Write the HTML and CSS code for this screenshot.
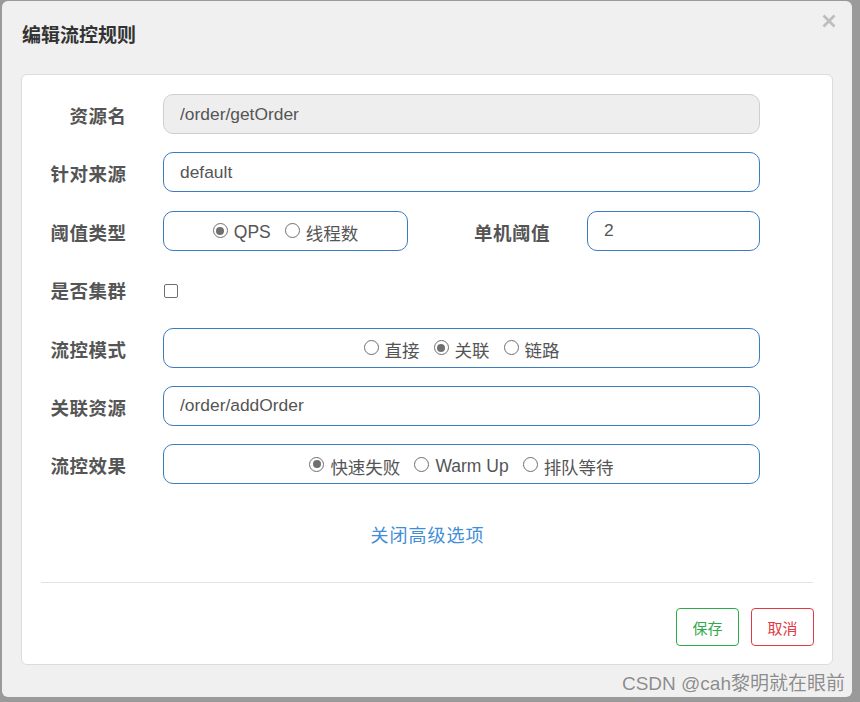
FILE: index.html
```html
<!DOCTYPE html>
<html lang="zh-CN">
<head>
<meta charset="utf-8">
<title>编辑流控规则</title>
<link rel="stylesheet" href="styles.css">
</head>
<body>
<div class="dialog">
  <button class="close" aria-label="关闭">
    <svg width="14" height="14" viewBox="0 0 14 14"><path d="M1.5 1.5 L12.5 12.5 M12.5 1.5 L1.5 12.5" stroke="#bdbdbd" stroke-width="2.6" stroke-linecap="butt"/></svg>
  </button>
  <h3 class="title">编辑流控规则</h3>
  <div class="panel">
    <form class="form">
      <div class="row">
        <label class="label">资源名</label>
        <div class="field"><input class="input disabled" value="/order/getOrder" disabled></div>
      </div>
      <div class="row">
        <label class="label">针对来源</label>
        <div class="field"><input class="input" value="default"></div>
      </div>
      <div class="row">
        <label class="label">阈值类型</label>
        <div class="field split">
          <div class="radio-box small">
            <span class="opt"><span class="radio on"></span>QPS</span>
            <span class="opt"><span class="radio"></span>线程数</span>
          </div>
          <label class="label inline">单机阈值</label>
          <input class="input grow" value="2">
        </div>
      </div>
      <div class="row">
        <label class="label">是否集群</label>
        <div class="field"><span class="checkbox"></span></div>
      </div>
      <div class="row">
        <label class="label">流控模式</label>
        <div class="field">
          <div class="radio-box">
            <span class="opt"><span class="radio"></span>直接</span>
            <span class="opt"><span class="radio on"></span>关联</span>
            <span class="opt"><span class="radio"></span>链路</span>
          </div>
        </div>
      </div>
      <div class="row">
        <label class="label">关联资源</label>
        <div class="field"><input class="input" value="/order/addOrder"></div>
      </div>
      <div class="row">
        <label class="label">流控效果</label>
        <div class="field">
          <div class="radio-box">
            <span class="opt"><span class="radio on"></span>快速失败</span>
            <span class="opt"><span class="radio"></span>Warm Up</span>
            <span class="opt"><span class="radio"></span>排队等待</span>
          </div>
        </div>
      </div>
    </form>
    <div class="toggle"><a class="link">关闭高级选项</a></div>
    <div class="divider"></div>
    <div class="footer">
      <button class="btn save">保存</button>
      <button class="btn cancel">取消</button>
    </div>
  </div>
  <div class="watermark">CSDN @cah黎明就在眼前</div>
</div>
</body>
</html>
```

FILE: styles.css
```css
* { box-sizing: border-box; }
html, body { margin: 0; padding: 0; }
body {
  width: 860px;
  height: 702px;
  background: #9a9a9a;
  overflow: hidden;
  font-family: "Liberation Sans", "Noto Sans CJK SC", sans-serif;
  color: #555;
}
.dialog {
  position: relative;
  margin: 1px 0 0 2px;
  width: 850px;
  height: 696px;
  background: #f0f0f0;
  border-radius: 6px;
  padding: 20px 19px 0 19px;
}
.close {
  position: absolute;
  top: 13px;
  right: 16px;
  padding: 0;
  border: 0;
  background: none;
  width: 14px;
  height: 14px;
  line-height: 0;
}
.title {
  margin: 0 0 0 1px;
  font-family: "Noto Sans CJK SC", sans-serif;
  font-size: 19px;
  line-height: 26px;
  font-weight: 700;
  color: #333;
}
.panel {
  margin-top: 27px;
  background: #fff;
  border: 1px solid #dcdcdc;
  border-radius: 6px;
  padding: 19px 18px 18px 19px;
}
.form {
  display: flex;
  flex-direction: column;
  gap: 18.4px;
  margin: 0;
}
.row {
  display: grid;
  grid-template-columns: 85px 597px;
  column-gap: 37px;
  height: 40px;
  align-items: center;
}
.label {
  text-align: right;
  font-family: "Noto Sans CJK SC", sans-serif;
  font-weight: 700;
  font-size: 18.5px;
  letter-spacing: 0.5px;
  margin-right: -0.5px;
  color: #555;
  padding-top: 2px;
  white-space: nowrap;
}
.field { height: 40px; display: flex; align-items: center; min-width: 0; }
.input {
  width: 100%;
  min-width: 0;
  height: 40px;
  border: 1px solid #3a7dbf;
  border-radius: 10px;
  padding: 0 16px;
  font-family: "Liberation Sans", "Noto Sans CJK SC", sans-serif;
  font-size: 17.4px;
  color: #555;
  background: #fff;
  outline: none;
}
.input.disabled {
  background: #eeeeee;
  border-color: #cfcfcf;
  color: #555;
}
.split { display: flex; }
.radio-box {
  width: 100%;
  height: 40px;
  border: 1px solid #3a7dbf;
  border-radius: 10px;
  display: flex;
  justify-content: center;
  align-items: center;
  gap: 14px;
  padding-top: 4px;
  font-size: 17.5px;
  font-family: "Liberation Sans", "Noto Sans CJK SC", sans-serif;
  color: #555;
}
.radio-box.small { width: 245px; flex: none; }
.label.inline { width: 142px; flex: none; margin-right: 37px; }
.input.grow { flex: 1 1 0; width: 0; }
.opt { display: flex; align-items: center; gap: 6px; white-space: nowrap; }
.radio {
  width: 15px;
  height: 15px;
  border: 1px solid #6f6f6f;
  border-radius: 50%;
  background: #fff;
  position: relative;
  margin-top: -4px;
  flex: none;
}
.radio.on::after {
  content: "";
  position: absolute;
  left: 2.5px;
  top: 2.5px;
  width: 8px;
  height: 8px;
  border-radius: 50%;
  background: #6f6f6f;
}
.checkbox {
  display: block;
  width: 14px;
  height: 14px;
  border: 1px solid #6f6f6f;
  border-radius: 2px;
  margin: 4px 0 0 1px;
}
.toggle {
  text-align: center;
  margin-top: 37px;
  line-height: 26px;
}
.link {
  font-family: "Noto Sans CJK SC", sans-serif;
  font-size: 18px;
  letter-spacing: 1px;
  color: #3f8ed6;
  cursor: pointer;
}
.divider {
  height: 1px;
  background: #e3e3e3;
  margin: 32px 1px 0 0;
}
.footer {
  display: flex;
  justify-content: flex-end;
  gap: 12px;
  margin-top: 25px;
}
.btn {
  width: 63px;
  height: 38px;
  border-radius: 4px;
  background: #fff;
  font-family: "Noto Sans CJK SC", sans-serif;
  font-size: 15px;
  padding: 0;
}
.save { border: 1px solid #2eaa48; color: #2eaa48; }
.cancel { border: 1px solid #e23a44; color: #e23a44; }
.watermark {
  position: absolute;
  right: 7px;
  bottom: 2px;
  font-family: "Liberation Sans", "Noto Sans CJK SC", sans-serif;
  font-size: 19px;
  color: #8c8c8c;
  white-space: nowrap;
  text-shadow: 0 0 1px #fff;
}
```
